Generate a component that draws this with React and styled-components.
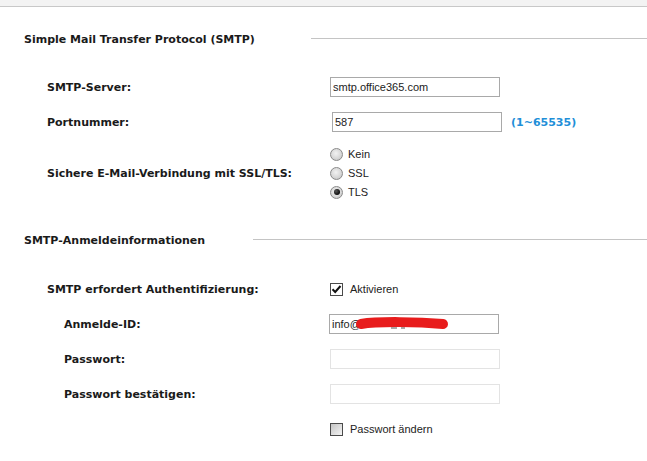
import React from "react";
import styled, { createGlobalStyle } from "styled-components";

const GlobalStyle = createGlobalStyle`
  body {
    margin: 0;
    background: #ffffff;
    font-family: "Liberation Sans", Arial, sans-serif;
    font-size: 11px;
    color: #1a1a1a;
  }
`;

const Page = styled.div`
  width: 647px;
  height: 461px;
  overflow: hidden;
`;

const TopBar = styled.div`
  height: 6px;
  background: #f3f3f3;
  border-bottom: 1px solid #c8c8c8;
`;

const SectionHead = styled.div`
  display: flex;
  align-items: center;
  height: 16px;
  padding-left: 24px;
  margin-top: ${(p) => p.top}px;
`;

const SectionTitle = styled.h3`
  margin: 0;
  font-family: "DejaVu Sans", Verdana, sans-serif;
  font-size: 11px;
  font-weight: bold;
  white-space: nowrap;
`;

const Rule = styled.div`
  flex: 1;
  height: 1px;
  margin-top: -2px;
  margin-left: ${(p) => p.gap}px;
  background: #c4c4c4;
`;

const Form = styled.div`
  display: grid;
  grid-template-columns: 330px 1fr;
  row-gap: 15px;
  align-items: center;
  margin-top: ${(p) => p.top}px;
`;

const Label = styled.div`
  padding-left: ${(p) => p.indent}px;
  font-family: "DejaVu Sans", Verdana, sans-serif;
  font-weight: bold;
  white-space: nowrap;
`;

const Field = styled.div`
  display: flex;
  align-items: center;
  gap: 9px;
  min-height: 20px;
`;

const TextInput = styled.input`
  width: 170px;
  height: 20px;
  box-sizing: border-box;
  margin: 0 0 0 ${(p) => p.shift || 0}px;
  padding: 0 2px;
  border: 1px solid ${(p) => (p.faint ? "#e3e3e3" : "#a9a9a9")};
  background: #fff;
  font-family: inherit;
  font-size: 11px;
  color: #222;
  outline: none;
`;

const Redacted = styled.div`
  position: relative;
  margin-left: -1px;
`;

const Scribble = styled.svg`
  position: absolute;
  left: 0;
  top: 0;
  pointer-events: none;
`;

const Hint = styled.span`
  font-family: "DejaVu Sans", Verdana, sans-serif;
  color: #1f8fd8;
  font-weight: bold;
`;

const RadioGroup = styled.div`
  display: flex;
  flex-direction: column;
  gap: 5px;
`;

const Option = styled.label`
  display: flex;
  align-items: center;
  gap: 5px;
  height: 14px;
  color: #222;
`;

const RadioDot = styled.span`
  width: 13px;
  height: 13px;
  box-sizing: border-box;
  border-radius: 50%;
  border: 1px solid #8a8a8a;
  background: radial-gradient(circle at 45% 40%, #f2f2f2 0%, #d8d8d8 55%, #bcbcbc 100%);
  display: flex;
  align-items: center;
  justify-content: center;

  &::after {
    content: "";
    display: ${(p) => (p.checked ? "block" : "none")};
    width: 6px;
    height: 6px;
    border-radius: 50%;
    background: radial-gradient(circle at 35% 35%, #555 0%, #0a0a0a 70%);
  }
`;

const Check = styled.label`
  display: flex;
  align-items: center;
  gap: 7px;
  color: #222;
`;

const Box = styled.span`
  width: 13px;
  height: 13px;
  box-sizing: border-box;
  border: 1px solid #4a4a4a;
  background: ${(p) =>
    p.checked ? "#fff" : "linear-gradient(135deg, #c4c4c4 0%, #e6e6e6 70%, #f4f4f4 100%)"};
  display: flex;
  align-items: center;
  justify-content: center;
`;

export default function App() {
  return (
    <Page>
      <GlobalStyle />
      <TopBar />

      <SectionHead top={24}>
        <SectionTitle>Simple Mail Transfer Protocol (SMTP)</SectionTitle>
        <Rule gap={56} />
      </SectionHead>

      <Form top={30}>
        <Label indent={47}>SMTP-Server:</Label>
        <Field>
          <TextInput defaultValue="smtp.office365.com" readOnly />
        </Field>

        <Label indent={47}>Portnummer:</Label>
        <Field>
          <TextInput shift={2} defaultValue="587" readOnly />
          <Hint>(1~65535)</Hint>
        </Field>

        <Label indent={47}>Sichere E-Mail-Verbindung mit SSL/TLS:</Label>
        <RadioGroup>
          <Option>
            <RadioDot />
            Kein
          </Option>
          <Option>
            <RadioDot />
            SSL
          </Option>
          <Option>
            <RadioDot checked />
            TLS
          </Option>
        </RadioGroup>
      </Form>

      <SectionHead top={33}>
        <SectionTitle>SMTP-Anmeldeinformationen</SectionTitle>
        <Rule gap={48} />
      </SectionHead>

      <Form top={31}>
        <Label indent={47}>SMTP erfordert Authentifizierung:</Label>
        <Field>
          <Check>
            <Box checked>
              <svg width="11" height="11" viewBox="0 0 11 11">
                <path d="M1.5 5.2 L4.2 8 L9.5 2" fill="none" stroke="#111" strokeWidth="2" />
              </svg>
            </Box>
            Aktivieren
          </Check>
        </Field>

        <Label indent={64}>Anmelde-ID:</Label>
        <Field>
          <Redacted>
            <TextInput defaultValue="info@" readOnly />
            <Scribble width="170" height="20" viewBox="0 0 170 20">
              <path d="M62 14 h6 M72 14 h4" stroke="#555" strokeWidth="1" />
              <path d="M32 10 C50 7, 90 8, 114 10" fill="none" stroke="#e81c1c" strokeWidth="10" strokeLinecap="round" />
            </Scribble>
          </Redacted>
        </Field>

        <Label indent={64}>Passwort:</Label>
        <Field>
          <TextInput faint readOnly />
        </Field>

        <Label indent={64}>Passwort bestätigen:</Label>
        <Field>
          <TextInput faint readOnly />
        </Field>

        <div />
        <Field>
          <Check>
            <Box />
            Passwort ändern
          </Check>
        </Field>
      </Form>
    </Page>
  );
}
